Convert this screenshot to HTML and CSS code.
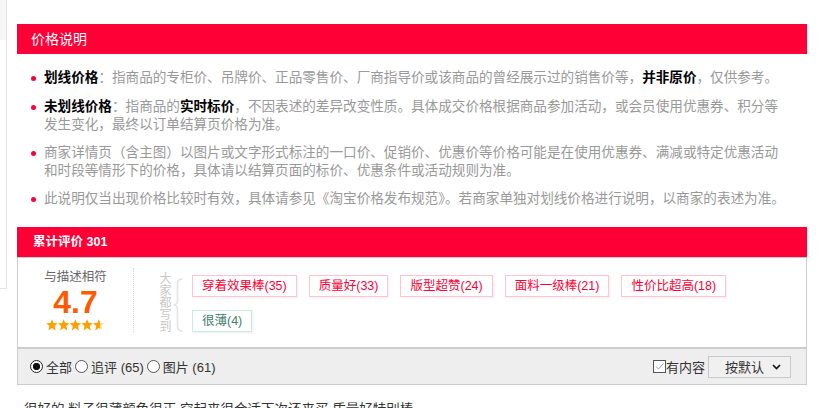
FILE: index.html
```html
<!DOCTYPE html>
<html>
<head>
    <title>价格说明 - 累计评价</title>
    <link rel="stylesheet" href="styles.css">
</head>
<body>
<div class="page">
    <aside class="side"></aside>

    <main class="main">
        <h2 class="bar">价格说明</h2>
        <ul class="notes">
            <li><b>划线价格</b>：指商品的专柜价、吊牌价、正品零售价、厂商指导价或该商品的曾经展示过的销售价等，<b>并非原价</b>，仅供参考。</li>
            <li><b>未划线价格</b>：指商品的<b>实时标价</b>，不因表述的差异改变性质。具体成交价格根据商品参加活动，或会员使用优惠券、积分等<br>发生变化，最终以订单结算页价格为准。</li>
            <li>商家详情页（含主图）以图片或文字形式标注的一口价、促销价、优惠价等价格可能是在使用优惠券、满减或特定优惠活动<br>和时段等情形下的价格，具体请以结算页面的标价、优惠条件或活动规则为准。</li>
            <li>此说明仅当出现价格比较时有效，具体请参见《淘宝价格发布规范》。若商家单独对划线价格进行说明，以商家的表述为准。</li>
        </ul>

        <h2 class="bar bar-bold">累计评价 301</h2>
        <div class="review-body">
            <div class="score">
                <div class="score-label">与描述相符</div>
                <div class="score-num">4.7</div>
                <svg class="stars" width="59" height="12" viewBox="0 0 59 12">
                    <defs>
                        <polygon id="star" points="6,0.2 7.6,4 11.8,4.3 8.6,7 9.6,11.4 6,9.1 2.4,11.4 3.4,7 0.2,4.3 4.4,4"/>
                        <linearGradient id="half" x1="0" x2="1" y1="0" y2="0">
                            <stop offset="0.6" stop-color="#ffa000"/>
                            <stop offset="0.6" stop-color="#fddfa8"/>
                        </linearGradient>
                    </defs>
                    <use href="#star" x="0" fill="#ffa000"/>
                    <use href="#star" x="11.7" fill="#ffa000"/>
                    <use href="#star" x="23.4" fill="#ffa000"/>
                    <use href="#star" x="35.1" fill="#ffa000"/>
                    <use href="#star" x="46.8" fill="url(#half)"/>
                </svg>
            </div>
            <div class="everyone">大家都写到</div>
            <svg class="brace" width="10" height="54" viewBox="0 0 10 54">
                <path d="M9.5 1 Q4.5 1 4.5 6 L4.5 22 Q4.5 27 0.5 27 Q4.5 27 4.5 32 L4.5 48 Q4.5 53 9.5 53" fill="none" stroke="#e4e4e4" stroke-width="1.6"/>
            </svg>
            <div class="tags">
                <span class="tag">穿着效果棒(35)</span>
                <span class="tag">质量好(33)</span>
                <span class="tag">版型超赞(24)</span>
                <span class="tag">面料一级棒(21)</span>
                <span class="tag">性价比超高(18)</span>
                <span class="tag tag-neg">很薄(4)</span>
            </div>
        </div>

        <div class="filter">
            <div class="filter-left">
                <label><input type="radio" name="kind" checked>全部</label>
                <label><input type="radio" name="kind">追评 (65)</label>
                <label><input type="radio" name="kind">图片 (61)</label>
            </div>
            <div class="filter-right">
                <label class="check">
                    <span class="box"><svg width="11" height="11" viewBox="0 0 11 11"><path d="M2 5.5 L4.5 8 L9.5 2.5" fill="none" stroke="#8aa0b8" stroke-width="1"/></svg></span>有内容
                </label>
                <div class="sort">按默认
                    <svg width="9" height="6" viewBox="0 0 9 6"><path d="M1 1 L4.5 4.5 L8 1" fill="none" stroke="#111" stroke-width="1.6"/></svg>
                </div>
            </div>
        </div>

        <p class="review-text">很好的 料子很薄颜色很正 穿起来很合适下次还来买 质量好特别棒</p>
    </main>
</div>
</body>
</html>
```

FILE: styles.css
```css
body { margin: 0; font-family: "Liberation Sans", "Noto Sans CJK SC", sans-serif; color: #333; background: #fff; }
.page { display: flex; align-items: flex-start; }
.side {
    width: 6px;
    height: 288px;
    border-right: 1px solid #e3e3e3;
    border-bottom: 1px solid #e3e3e3;
    background: linear-gradient(#f6f6f6 0 40px, #fff 40px);
}
.main { width: 790px; margin-left: 10px; padding-top: 24px; }

.bar {
    margin: 0;
    height: 30px;
    line-height: 30px;
    padding-left: 14px;
    background: #ff0036;
    color: #fff;
    font-size: 14px;
    font-weight: normal;
}
.bar-bold { padding-left: 16px; font-size: 12.5px; font-weight: bold; }

.notes { list-style: none; margin: 15px 0 19px; padding: 0 0 0 27px; }
.notes li {
    position: relative;
    margin-bottom: 10px;
    font-size: 13.6px;
    line-height: 18px;
    color: #999;
    white-space: nowrap;
}
.notes li:nth-child(2) { margin-top: 11px; }
.notes li::before {
    content: "";
    position: absolute;
    left: -13px;
    top: 7px;
    width: 5px;
    height: 5px;
    border-radius: 50%;
    background: #ff0036;
}
.notes b { color: #000; }

.review-body {
    display: flex;
    align-items: flex-start;
    height: 89px;
    border: 1px solid #ccc;
}
.score {
    width: 115px;
    margin-top: 10px;
    border-right: 1px dotted #d8d8d8;
    text-align: center;
}
.score-label { font-size: 12.5px; line-height: 18px; color: #666; }
.score-num {
    font-size: 32px;
    line-height: 32px;
    font-weight: bold;
    color: #ff5a00;
}
.stars { display: block; margin: 1px auto 1px; }

.everyone {
    writing-mode: vertical-rl;
    margin: 14px 0 0 24px;
    font-size: 12px;
    line-height: 12px;
    color: #c8c8c8;
}
.brace { margin: 20px 0 0 3px; }

.tags {
    display: flex;
    flex-wrap: wrap;
    gap: 13px 12px;
    width: 560px;
    margin: 17px 0 0 9px;
}
.tag {
    height: 20px;
    line-height: 20px;
    padding: 0 9px;
    border: 1px solid #ffc4d0;
    font-size: 12.5px;
    color: #ff0036;
    background: #fff;
    box-shadow: 1px 1px 2px rgba(0, 0, 0, 0.07);
}
.tag-neg { border-color: #c9ece1; color: #457e6f; }

.filter {
    display: flex;
    justify-content: space-between;
    align-items: center;
    height: 35px;
    padding: 0 15px 0 12px;
    border: 1px solid #ccc;
    background: #eee;
    font-size: 13px;
    color: #333;
}
.filter-left { display: flex; align-items: center; }
.filter-left label { display: flex; align-items: center; margin-right: 3px; }
.filter-left input {
    appearance: none;
    width: 13px;
    height: 13px;
    margin: 0 3px 0 0;
    border: 1px solid #555;
    border-radius: 50%;
    background: #fff;
}
.filter-left input:checked { background: radial-gradient(circle, #111 0 3.4px, #fff 3.9px); border-color: #222; }

.filter-right { display: flex; align-items: center; }
.check { display: flex; align-items: center; margin-right: 3px; }
.box {
    display: flex;
    width: 11px;
    height: 11px;
    border: 1px solid #555;
    background: #fff;
}
.sort {
    display: flex;
    align-items: center;
    justify-content: space-between;
    width: 56px;
    height: 20px;
    padding: 0 9px 0 16px;
    border: 1px solid #c8c8c8;
    background: #f0f0f0;
}

.review-text { margin: 16px 0 0 7px; font-size: 13.5px; line-height: 18px; color: #333; }
```
